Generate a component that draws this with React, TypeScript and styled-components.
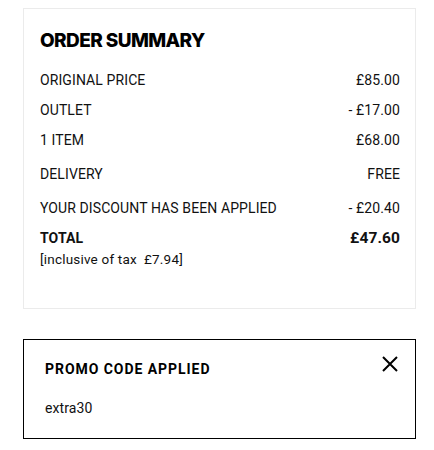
import React from "react";
import styled, { createGlobalStyle } from "styled-components";

const Global = createGlobalStyle`
  html, body { margin: 0; padding: 0; background: #fff; }
  body { font-family: Roboto, "Liberation Sans", Arial, sans-serif; color: #000; }
`;

const Page = styled.div`
  padding: 8px 18px 12px 23px;
  display: flex;
  flex-direction: column;
  gap: 30px;
`;

const SummaryCard = styled.section`
  width: 393px;
  height: 301px;
  box-sizing: border-box;
  border: 1px solid #ebebeb;
  padding: 0 15px 0 16px;
  display: flex;
  flex-direction: column;
`;

const Title = styled.h2`
  margin: 20px 0 12px;
  font-family: Inter, "Noto Sans", sans-serif;
  font-weight: 800;
  font-size: 19px;
  line-height: 24px;
  letter-spacing: -0.6px;
  text-transform: uppercase;
`;

const Row = styled.div<{ $gap?: number; $h?: number; $bold?: boolean }>`
  display: flex;
  justify-content: space-between;
  align-items: center;
  height: ${(p) => p.$h ?? 30}px;
  margin-top: ${(p) => p.$gap ?? 0}px;
  font-size: 14px;
  font-weight: ${(p) => (p.$bold ? 700 : 400)};
  letter-spacing: 0.1px;
  text-transform: uppercase;
  color: #111;
`;

const Amount = styled.span<{ $big?: boolean }>`
  font-size: ${(p) => (p.$big ? 15.5 : 14)}px;
`;

const TaxNote = styled.div`
  font-size: 13.5px;
  line-height: 18px;
  letter-spacing: 0.2px;
  color: #111;
`;

const PromoCard = styled.section`
  width: 393px;
  height: 100px;
  box-sizing: border-box;
  border: 1px solid #000;
  padding: 16px 17px 0 21px;
`;

const PromoHead = styled.div`
  display: flex;
  justify-content: space-between;
  align-items: flex-start;
`;

const PromoTitle = styled.h3`
  margin: 3px 0 0;
  font-size: 14px;
  font-weight: 700;
  line-height: 20px;
  letter-spacing: 0.95px;
  text-transform: uppercase;
`;

const CloseButton = styled.button`
  border: 0;
  background: none;
  padding: 0;
  width: 16px;
  height: 16px;
  display: flex;
  cursor: pointer;
`;

const PromoCode = styled.div`
  margin-top: 20px;
  font-size: 14px;
  line-height: 18px;
  letter-spacing: 0.1px;
  color: #111;
`;

export default function App() {
  return (
    <>
      <Global />
      <Page>
        <SummaryCard>
          <Title>Order Summary</Title>
          <Row>
            <span>Original price</span>
            <Amount>£85.00</Amount>
          </Row>
          <Row>
            <span>Outlet</span>
            <Amount>- £17.00</Amount>
          </Row>
          <Row>
            <span>1 item</span>
            <Amount>£68.00</Amount>
          </Row>
          <Row $gap={4}>
            <span>Delivery</span>
            <Amount>FREE</Amount>
          </Row>
          <Row $gap={4}>
            <span>Your discount has been applied</span>
            <Amount>- £20.40</Amount>
          </Row>
          <Row $gap={3} $h={24} $bold>
            <span>Total</span>
            <Amount $big>£47.60</Amount>
          </Row>
          <TaxNote>[inclusive of tax&nbsp; £7.94]</TaxNote>
        </SummaryCard>
        <PromoCard>
          <PromoHead>
            <PromoTitle>Promo code applied</PromoTitle>
            <CloseButton aria-label="Remove promo code">
              <svg width="16" height="16" viewBox="0 0 16 16">
                <path d="M1 1L15 15M15 1L1 15" stroke="#000" strokeWidth="2" fill="none" />
              </svg>
            </CloseButton>
          </PromoHead>
          <PromoCode>extra30</PromoCode>
        </PromoCard>
      </Page>
    </>
  );
}
